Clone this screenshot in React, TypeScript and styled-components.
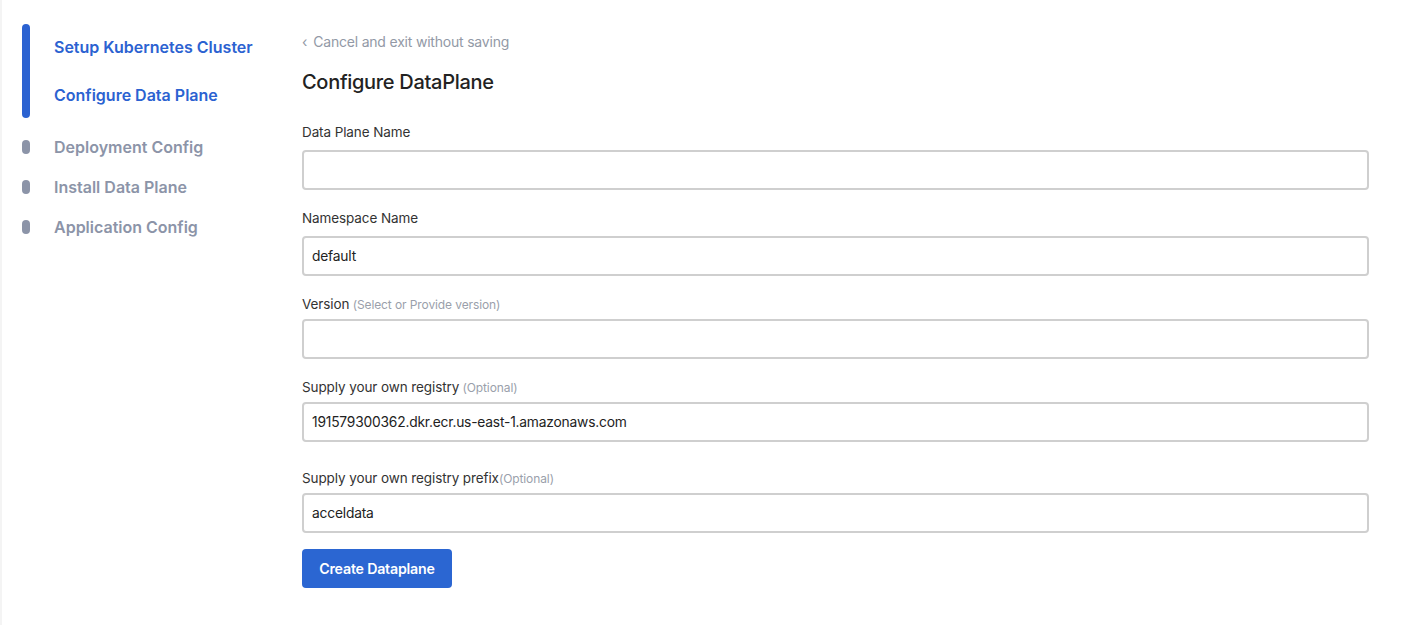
import React from 'react'
import styled, { createGlobalStyle } from 'styled-components'

const GlobalStyle = createGlobalStyle`
    html, body {
        margin: 0;
        padding: 0;
        background: #fff;
    }
    body {
        font-family: Inter, "Noto Sans", sans-serif;
        color: #222;
    }
    * {
        box-sizing: border-box;
    }
`

const Page = styled.div`
    display: flex;
    min-height: 625px;
    border-left: 2px solid #f4f4f4;
`

const Sidebar = styled.nav`
    width: 300px;
    flex-shrink: 0;
    padding: 24px 0 0 20px;
    display: flex;
    flex-direction: column;
`

const ActiveGroup = styled.div`
    display: flex;
    gap: 24px;
    margin-bottom: 9px;
`

const ActiveBar = styled.div`
    width: 8px;
    height: 94px;
    border-radius: 4px;
    background: #2b62d1;
`

const ActiveList = styled.div`
    display: flex;
    flex-direction: column;
    padding-top: 14px;
    gap: 29px;
`

const StepRow = styled.div`
    display: flex;
    align-items: center;
    gap: 24px;
    height: 40px;
`

const Dot = styled.div`
    width: 8px;
    height: 14px;
    border-radius: 4px;
    background: #8c94a8;
`

const StepLabel = styled.span<{ $active?: boolean }>`
    font-size: 16px;
    font-weight: 600;
    letter-spacing: 0;
    line-height: 19px;
    color: ${p => (p.$active ? '#2b62d1' : '#8c94a8')};
`

const Main = styled.main`
    flex: 1;
    padding: 31px 45px 0 0;
`

const BackLink = styled.a`
    display: inline-flex;
    align-items: center;
    gap: 6px;
    font-size: 14px;
    color: #9299a6;
    text-decoration: none;
    letter-spacing: -0.2px;
    cursor: pointer;
`

const Title = styled.h1`
    margin: 17px 0 27px;
    font-size: 20px;
    font-weight: 500;
    letter-spacing: -0.3px;
    line-height: 28px;
    color: #222;
`

const Field = styled.div<{ $gap: number; $labelGap: number }>`
    display: flex;
    flex-direction: column;
    gap: ${p => p.$labelGap}px;
    margin-bottom: ${p => p.$gap}px;
`

const Label = styled.label`
    font-size: 13.5px;
    line-height: 19px;
    color: #333;
    letter-spacing: -0.1px;
`

const Hint = styled.span`
    font-size: 12px;
    color: #9a9fab;
`

const Input = styled.input`
    height: 40px;
    width: 100%;
    border: 2px solid #cfcfcf;
    border-radius: 4px;
    padding: 0 8px;
    font-family: Inter, "Noto Sans", sans-serif;
    font-size: 13.8px;
    letter-spacing: -0.2px;
    color: #222;
    outline: none;
    background: #fff;
`

const Button = styled.button`
    width: 150px;
    height: 39px;
    border: none;
    border-radius: 4px;
    background: #2b66d2;
    color: #fff;
    font-family: Inter, "Noto Sans", sans-serif;
    font-size: 14.2px;
    font-weight: 600;
    letter-spacing: -0.2px;
    cursor: pointer;
`

const activeSteps = ['Setup Kubernetes Cluster', 'Configure Data Plane']
const pendingSteps = ['Deployment Config', 'Install Data Plane', 'Application Config']

const fields = [
    { label: 'Data Plane Name', value: '', gap: 19, labelGap: 8 },
    { label: 'Namespace Name', value: 'default', gap: 19, labelGap: 8 },
    { label: 'Version', hint: ' (Select or Provide version)', value: '', gap: 19, labelGap: 5 },
    { label: 'Supply your own registry', hint: ' (Optional)', value: '191579300362.dkr.ecr.us-east-1.amazonaws.com', gap: 27, labelGap: 5 },
    { label: 'Supply your own registry prefix', hint: '(Optional)', value: 'acceldata', gap: 16, labelGap: 5 },
]

export default function App() {
    return (
        <>
            <GlobalStyle />
            <Page>
                <Sidebar>
                    <ActiveGroup>
                        <ActiveBar />
                        <ActiveList>
                            {activeSteps.map(s => (
                                <StepLabel key={s} $active>{s}</StepLabel>
                            ))}
                        </ActiveList>
                    </ActiveGroup>
                    {pendingSteps.map(s => (
                        <StepRow key={s}>
                            <Dot />
                            <StepLabel>{s}</StepLabel>
                        </StepRow>
                    ))}
                </Sidebar>
                <Main>
                    <BackLink>
                        <span>‹</span>
                        <span>Cancel and exit without saving</span>
                    </BackLink>
                    <Title>Configure DataPlane</Title>
                    {fields.map(f => (
                        <Field key={f.label} $gap={f.gap} $labelGap={f.labelGap}>
                            <Label>
                                {f.label}
                                {f.hint && <Hint>{f.hint}</Hint>}
                            </Label>
                            <Input defaultValue={f.value} />
                        </Field>
                    ))}
                    <Button>Create Dataplane</Button>
                </Main>
            </Page>
        </>
    )
}
